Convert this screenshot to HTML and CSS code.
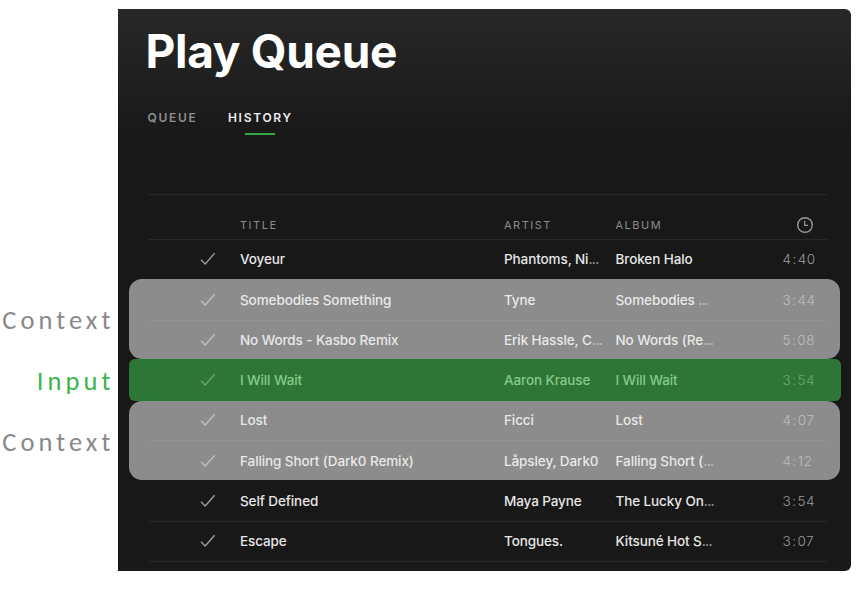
FILE: index.html
```html
<!DOCTYPE html>
<html lang="en">
<head>
<meta charset="utf-8">
<title>Play Queue</title>
<link rel="stylesheet" href="styles.css">
</head>
<body>
<svg class="defs" width="0" height="0"><symbol id="check" viewBox="0 0 16 14"><path d="M1 7.8 5.2 12 14.6 1.2" fill="none" stroke="currentColor" stroke-width="1.3"/></symbol></svg>
<div class="page">
  <aside class="labels">
    <span class="label">Context</span>
    <span class="label label-input">Input</span>
    <span class="label">Context</span>
  </aside>
  <main class="panel">
    <h1>Play Queue</h1>
    <nav class="tabs"><span class="tab">QUEUE</span><span class="tab active">HISTORY</span></nav>
    <section class="table">
      <div class="row head"><span></span><span>TITLE</span><span>ARTIST</span><span>ALBUM</span>
        <svg class="clock" viewBox="0 0 18 18"><circle cx="9" cy="9" r="7.3" fill="none" stroke="currentColor" stroke-width="1.4"/><path d="M8.7 4.8V9.3H12" fill="none" stroke="currentColor" stroke-width="1.2"/></svg></div>
      <div class="group">
        <div class="row"><svg class="check"><use href="#check"/></svg><span>Voyeur</span><span>Phantoms, Ni<i>...</i></span><span>Broken Halo</span><time>4<b>:</b>40</time></div>
      </div>
      <div class="group context">
        <div class="row"><svg class="check"><use href="#check"/></svg><span>Somebodies Something</span><span>Tyne</span><span>Somebodies <i>...</i></span><time>3<b>:</b>44</time></div>
        <div class="row"><svg class="check"><use href="#check"/></svg><span>No Words - Kasbo Remix</span><span>Erik Hassle, C<i>...</i></span><span>No Words (Re<i>...</i></span><time>5<b>:</b>08</time></div>
      </div>
      <div class="group input">
        <div class="row"><svg class="check"><use href="#check"/></svg><span>I Will Wait</span><span>Aaron Krause</span><span>I Will Wait</span><time>3<b>:</b>54</time></div>
      </div>
      <div class="group context second">
        <div class="row"><svg class="check"><use href="#check"/></svg><span>Lost</span><span>Ficci</span><span>Lost</span><time>4<b>:</b>07</time></div>
        <div class="row"><svg class="check"><use href="#check"/></svg><span>Falling Short (Dark0 Remix)</span><span>Låpsley, Dark0</span><span>Falling Short (<i>...</i></span><time>4<b>:</b>12</time></div>
      </div>
      <div class="group">
        <div class="row"><svg class="check"><use href="#check"/></svg><span>Self Defined</span><span>Maya Payne</span><span>The Lucky On<i>...</i></span><time>3<b>:</b>54</time></div>
        <div class="row"><svg class="check"><use href="#check"/></svg><span>Escape</span><span>Tongues.</span><span>Kitsuné Hot S<i>...</i></span><time>3<b>:</b>07</time></div>
      </div>
    </section>
  </main>
</div>
</body>
</html>
```
FILE: styles.css
```css
* { box-sizing: border-box; }
body { margin: 0; background: #fff; font-family: Inter, "Liberation Sans", sans-serif; }
.defs { display: block; }
.page { display: flex; width: 868px; height: 591px; padding-top: 9px; overflow: hidden; }
.labels { width: 117.5px; padding: 281px 3px 0 0; display: flex; flex-direction: column; align-items: flex-end; }
.label { height: 60.75px; line-height: 61px; font-family: Carlito, Lato, sans-serif; font-size: 26.5px; letter-spacing: 4.1px; color: #898989; }
.label-input { color: #39b54a; }
.panel { width: 733.5px; height: 562px; padding: 0 24px 0 30px; border-radius: 0 6px 6px 0; background: linear-gradient(#282828, #181818 130px); overflow: hidden; }
h1 { margin: 0 0 0 -2px; padding-top: 13px; height: 95px; font-size: 46px; line-height: 58px; font-weight: 700; letter-spacing: -0.3px; color: #fff; white-space: nowrap; }
.tabs { display: flex; gap: 30.5px; height: 90px; font-size: 12px; line-height: 27px; font-weight: 600; letter-spacing: 1.7px; color: #8f8f8f; }
.tab { height: 32px; }
.active { color: #eee; display: flex; flex-direction: column; align-items: center; }
.active::after { content: ""; width: 30px; height: 2px; margin-top: 2px; background: #32a845; }
.table { border-top: 1px solid #282828; }
.row { position: relative; display: grid; grid-template-columns: 92.5px 264px 111.5px 1fr 44.5px; align-items: center; height: 40.25px; padding-bottom: .5px; border-bottom: 1px solid #282828; font-size: 13.5px; font-weight: 500; letter-spacing: -0.1px; color: #e6e6e6; white-space: nowrap; }
.head { height: 45px; padding-top: 15.5px; font-size: 11px; font-weight: 400; letter-spacing: 1.5px; color: #8c8c8c; }
.row i { font-style: normal; letter-spacing: -0.7px; color: #8e8e8e; }
.check { width: 16px; height: 14px; margin-left: 52.5px; color: #a0a0a0; }
.clock { width: 18px; height: 18px; margin-left: 13px; color: #999; }
time { font-size: 13.5px; font-weight: 300; letter-spacing: .5px; color: #999; }
time b { font-weight: 300; margin: 0 1px; }
.group { position: relative; }
.context::before, .input::before { content: ""; position: absolute; top: -1px; bottom: 2px; left: -19px; right: -13px; border-radius: 13px; background: #8c8c8c; }
.context .row { color: #e8e8e8; border-color: #929292; }
.context .row:last-child, .input .row { border-color: transparent; }
.context i, .context time { color: #bcbcbc; }
.context .check { color: #c0c0c0; }
.input::before { top: -1.5px; bottom: .5px; right: -14px; left: -18.5px; border-radius: 6px; background: #2e7636; }
.input .row { color: #83cb8a; }
.input time, .input .check { color: #68a96d; }
.context.second::before { top: -.5px; bottom: 1.5px; }
```
